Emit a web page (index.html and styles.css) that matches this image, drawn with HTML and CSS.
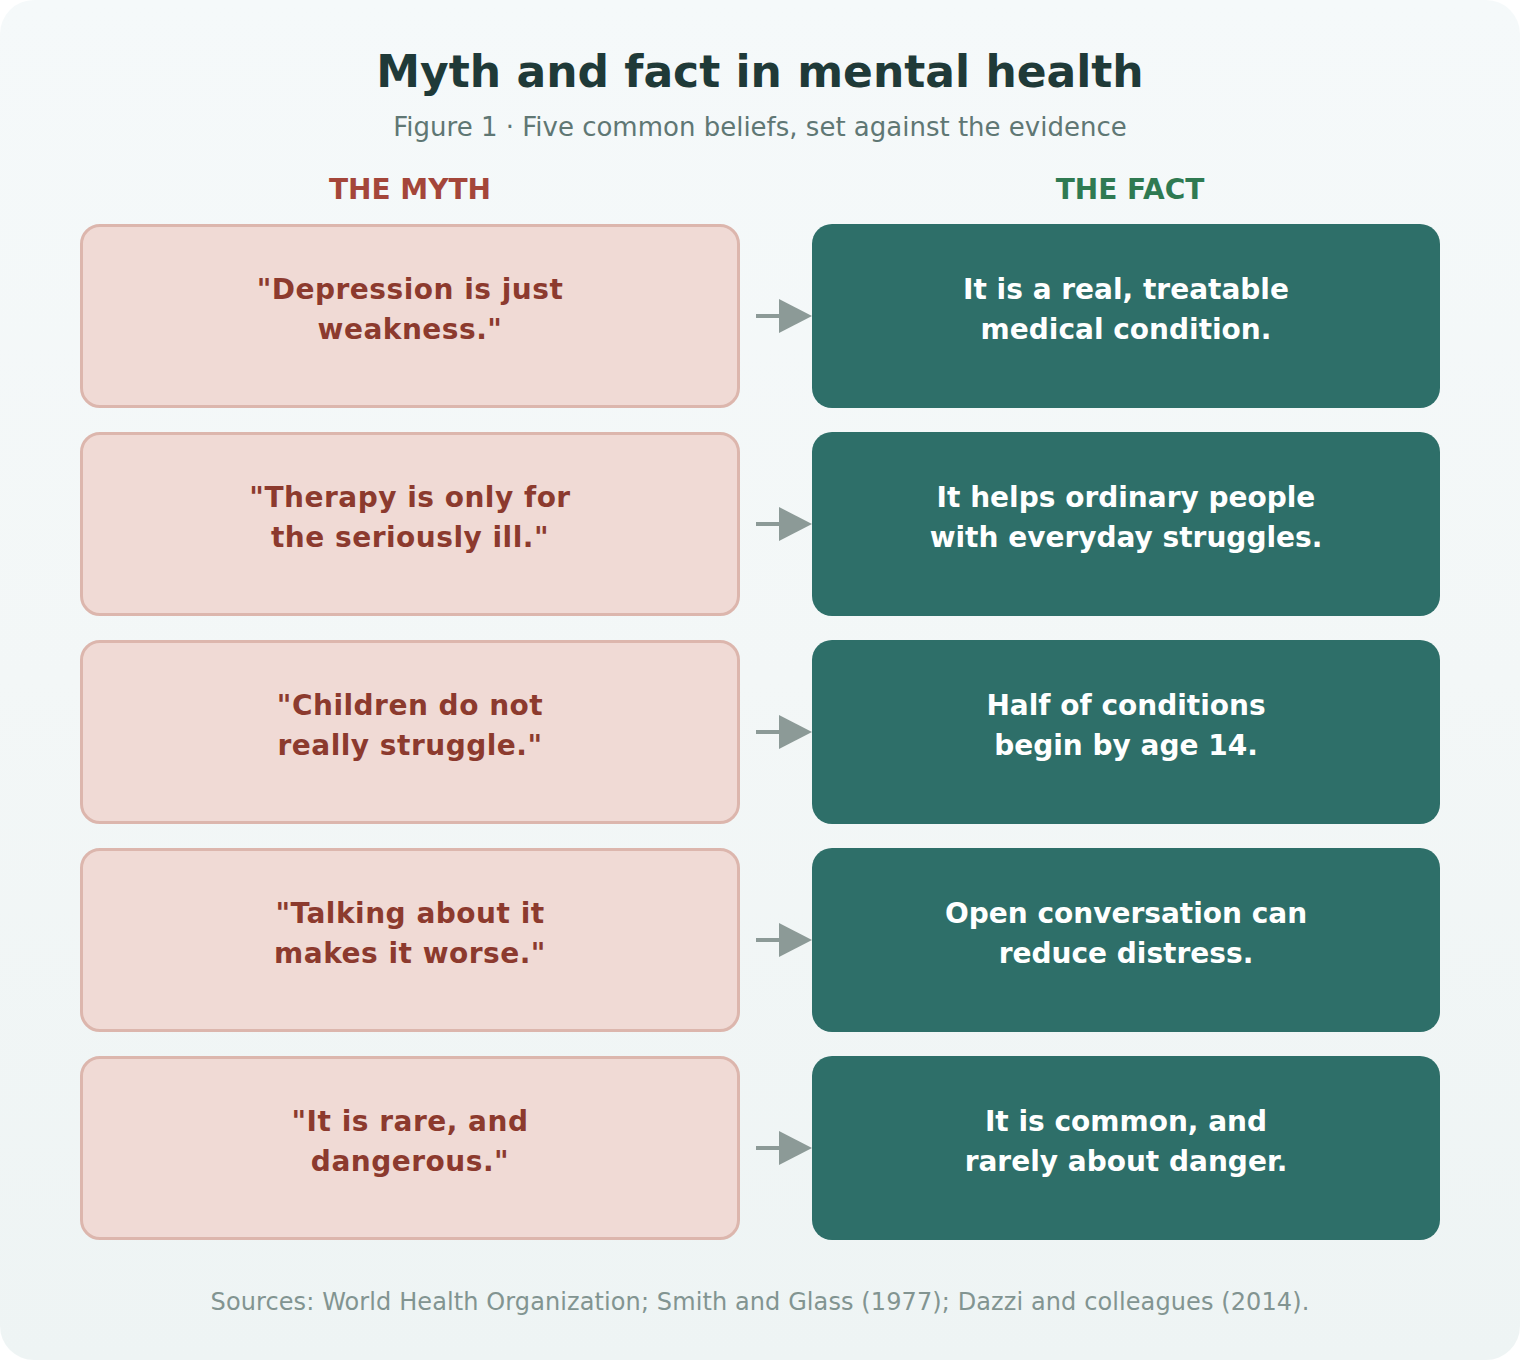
FILE: index.html
```html
<!DOCTYPE html>
<html lang="en">
<head>
<meta charset="utf-8">
<title>Myth and fact in mental health</title>
<link rel="stylesheet" href="styles.css">
</head>
<body>
<main class="figure">
  <h1 class="title">Myth and fact in mental health</h1>
  <p class="subtitle">Figure 1 · Five common beliefs, set against the evidence</p>

  <div class="grid">
    <div class="col-head myth-head">THE MYTH</div>
    <div></div>
    <div class="col-head fact-head">THE FACT</div>

    <div class="box myth">"Depression is just<br>weakness."</div>
    <div class="arrow"><svg viewBox="0 0 72 36" width="72" height="36"><rect x="16" y="16" width="24" height="4"/><polygon points="39,1 72,18 39,35"/></svg></div>
    <div class="box fact">It is a real, treatable<br>medical condition.</div>

    <div class="box myth">"Therapy is only for<br>the seriously ill."</div>
    <div class="arrow"><svg viewBox="0 0 72 36" width="72" height="36"><rect x="16" y="16" width="24" height="4"/><polygon points="39,1 72,18 39,35"/></svg></div>
    <div class="box fact">It helps ordinary people<br>with everyday struggles.</div>

    <div class="box myth">"Children do not<br>really struggle."</div>
    <div class="arrow"><svg viewBox="0 0 72 36" width="72" height="36"><rect x="16" y="16" width="24" height="4"/><polygon points="39,1 72,18 39,35"/></svg></div>
    <div class="box fact">Half of conditions<br>begin by age 14.</div>

    <div class="box myth">"Talking about it<br>makes it worse."</div>
    <div class="arrow"><svg viewBox="0 0 72 36" width="72" height="36"><rect x="16" y="16" width="24" height="4"/><polygon points="39,1 72,18 39,35"/></svg></div>
    <div class="box fact">Open conversation can<br>reduce distress.</div>

    <div class="box myth">"It is rare, and<br>dangerous."</div>
    <div class="arrow"><svg viewBox="0 0 72 36" width="72" height="36"><rect x="16" y="16" width="24" height="4"/><polygon points="39,1 72,18 39,35"/></svg></div>
    <div class="box fact">It is common, and<br>rarely about danger.</div>
  </div>

  <p class="sources">Sources: World Health Organization; Smith and Glass (1977); Dazzi and colleagues (2014).</p>
</main>
</body>
</html>
```

FILE: styles.css
```css
* { box-sizing: border-box; }

html, body {
  margin: 0;
  padding: 0;
  background: #ffffff;
}

body {
  font-family: "DejaVu Sans", "Liberation Sans", sans-serif;
}

.figure {
  width: 1520px;
  height: 1360px;
  border-radius: 34px;
  background: linear-gradient(to bottom, #f5f9fa 0%, #f3f7f7 50%, #eef4f4 100%);
  padding: 44px 80px 0;
  display: flex;
  flex-direction: column;
  align-items: stretch;
}

.title {
  margin: 0;
  font-size: 44px;
  line-height: 56px;
  font-weight: bold;
  color: #1f3a38;
  text-align: center;
}

.subtitle {
  margin: 11px 0 0;
  font-size: 26px;
  line-height: 32px;
  color: #5f7774;
  text-align: center;
}

.grid {
  margin-top: 29px;
  display: grid;
  grid-template-columns: 660px 72px 628px;
  grid-template-rows: 28px;
  grid-auto-rows: 184px;
  row-gap: 24px;
}

.col-head {
  height: 28px;
  font-size: 28px;
  line-height: 36px;
  font-weight: bold;
  text-align: center;
  white-space: nowrap;
}

.myth-head { color: #a4463a; }
.fact-head { color: #2f7a52; padding-left: 8px; }

.box {
  height: 184px;
  border-radius: 20px;
  display: flex;
  align-items: center;
  justify-content: center;
  text-align: center;
  font-size: 28px;
  line-height: 40px;
  font-weight: bold;
  padding-bottom: 13px;
}

.myth {
  background: #f0dad5;
  border: 3px solid #dcb6ad;
  color: #8c3a2e;
  letter-spacing: 0.5px;
}

.fact {
  background: #2e6f69;
  color: #ffffff;
}

.arrow {
  display: flex;
  align-items: center;
}

.arrow svg {
  display: block;
  fill: #8c9a97;
}

.sources {
  margin: 48px 0 0;
  font-size: 24px;
  line-height: 28px;
  letter-spacing: 0.1px;
  color: #829491;
  text-align: center;
}
```
